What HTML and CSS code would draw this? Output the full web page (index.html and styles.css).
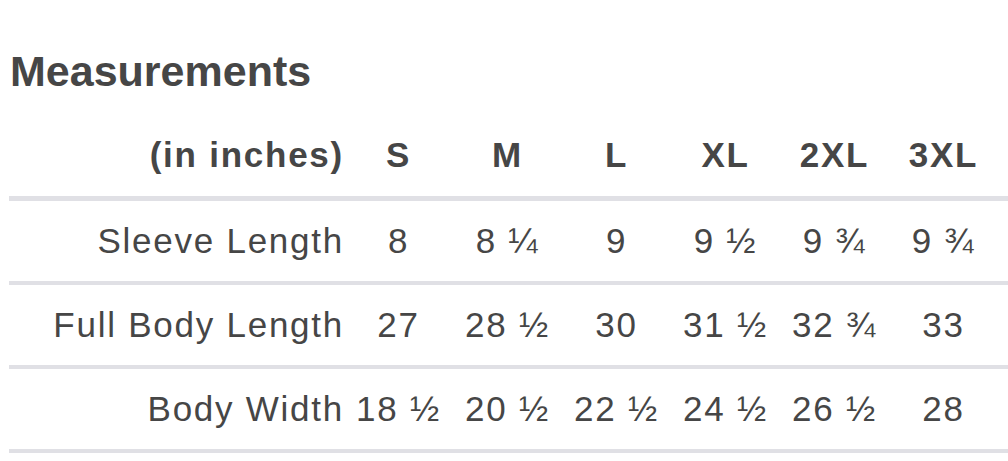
FILE: index.html
```html
<!DOCTYPE html>
<html>
<head>
<meta charset="utf-8">
<link rel="stylesheet" href="styles.css">
</head>
<body>
<div class="sheet">
  <h1 class="title">Measurements</h1>
  <div class="table">
    <div class="row head">
      <div class="label">(in inches)</div>
      <div class="cell">S</div>
      <div class="cell">M</div>
      <div class="cell">L</div>
      <div class="cell">XL</div>
      <div class="cell">2XL</div>
      <div class="cell">3XL</div>
    </div>
    <div class="row">
      <div class="label">Sleeve Length</div>
      <div class="cell">8</div>
      <div class="cell">8 ¼</div>
      <div class="cell">9</div>
      <div class="cell">9 ½</div>
      <div class="cell">9 ¾</div>
      <div class="cell">9 ¾</div>
    </div>
    <div class="row">
      <div class="label">Full Body Length</div>
      <div class="cell">27</div>
      <div class="cell">28 ½</div>
      <div class="cell">30</div>
      <div class="cell">31 ½</div>
      <div class="cell">32 ¾</div>
      <div class="cell">33</div>
    </div>
    <div class="row">
      <div class="label">Body Width</div>
      <div class="cell">18 ½</div>
      <div class="cell">20 ½</div>
      <div class="cell">22 ½</div>
      <div class="cell">24 ½</div>
      <div class="cell">26 ½</div>
      <div class="cell">28</div>
    </div>
  </div>
</div>
</body>
</html>
```

FILE: styles.css
```css
html, body {
  margin: 0;
  padding: 0;
  background: #ffffff;
  overflow: hidden;
}

.sheet {
  font-family: "Liberation Sans", Arial, sans-serif;
  color: #464646;
  padding-left: 9px;
}

.title {
  margin: 50px 0 0 1px;
  font-size: 43px;
  line-height: 42px;
  font-weight: 700;
}

.table {
  margin-top: 22px;
  display: flex;
  flex-direction: column;
}

.row {
  display: grid;
  grid-template-columns: 335px repeat(6, 109px);
  height: 80px;
  line-height: 80px;
  font-size: 35px;
  letter-spacing: 1.75px;
  white-space: nowrap;
  border-bottom: 4px solid #e0e0e5;
}

.row.head {
  height: 82px;
  line-height: 82px;
  font-weight: 700;
  border-bottom-width: 5px;
}

.label {
  text-align: right;
}

.cell {
  text-align: center;
}
```
